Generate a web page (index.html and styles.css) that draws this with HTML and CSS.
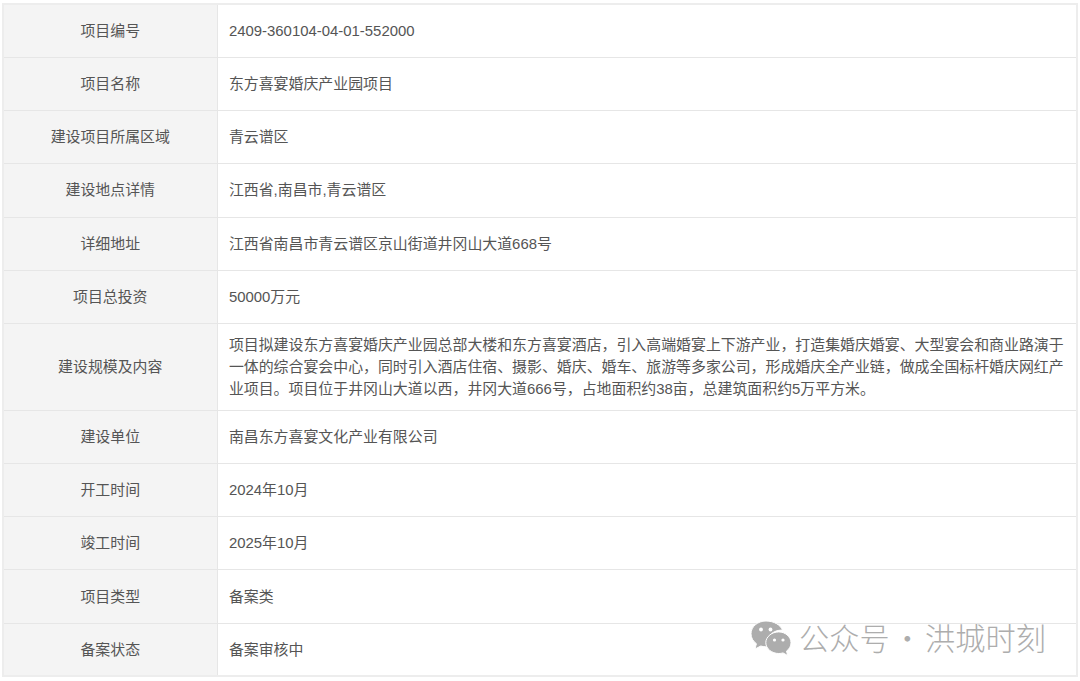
FILE: index.html
```html
<!DOCTYPE html>
<html lang="zh-CN">
<head>
<meta charset="utf-8">
<title>项目信息</title>
<link rel="stylesheet" href="styles.css">
</head>
<body>
<table class="info">
<tbody>
<tr><th>项目编号</th><td>2409-360104-04-01-552000</td></tr>
<tr><th>项目名称</th><td>东方喜宴婚庆产业园项目</td></tr>
<tr><th>建设项目所属区域</th><td>青云谱区</td></tr>
<tr><th>建设地点详情</th><td>江西省,南昌市,青云谱区</td></tr>
<tr><th>详细地址</th><td>江西省南昌市青云谱区京山街道井冈山大道668号</td></tr>
<tr><th>项目总投资</th><td>50000万元</td></tr>
<tr class="tall"><th>建设规模及内容</th><td>项目拟建设东方喜宴婚庆产业园总部大楼和东方喜宴酒店，引入高端婚宴上下游产业，打造集婚庆婚宴、大型宴会和商业路演于一体的综合宴会中心，同时引入酒店住宿、摄影、婚庆、婚车、旅游等多家公司，形成婚庆全产业链，做成全国标杆婚庆网红产业项目。项目位于井冈山大道以西，井冈大道666号，占地面积约38亩，总建筑面积约5万平方米。</td></tr>
<tr><th>建设单位</th><td>南昌东方喜宴文化产业有限公司</td></tr>
<tr><th>开工时间</th><td>2024年10月</td></tr>
<tr><th>竣工时间</th><td>2025年10月</td></tr>
<tr><th>项目类型</th><td>备案类</td></tr>
<tr><th>备案状态</th><td>备案审核中</td></tr>
</tbody>
</table>
<div class="mark">
<svg class="mark-icon" width="42" height="36" viewBox="0 0 42 36" aria-hidden="true">
<path class="bubble" d="M16 1C7.6 1 1 6.700 1 13.800c0 4 2.100 7.500 5.400 9.900L5 29l5.800-3c1.500.5 3.200.8 5 .8.700 0 1.300 0 2-.1-.5-1.300-.7-2.600-.7-4 0-7 6.500-12.600 14.600-12.600h.8C30.500 5 24 1 16 1z"/>
<path class="bubble" d="M41 22.700c0-6-5.900-10.800-12.200-10.800-6.900 0-13 4.800-13 10.800s6.100 10.800 13 10.800c1.500 0 2.900-.2 4.200-.6l4.700 2.600-1.200-4.400c3-2.200 4.500-5.100 4.500-8.400z"/>
<circle class="eye" cx="11" cy="9.500" r="1.900"/><circle class="eye" cx="20.500" cy="9.500" r="1.900"/>
<circle class="eye" cx="24.500" cy="20" r="1.600"/><circle class="eye" cx="33" cy="20" r="1.600"/>
</svg>
<span class="mark-text">公众号 · 洪城时刻</span>
</div>
</body>
</html>
```

FILE: styles.css
```css
html, body {
  margin: 0;
  padding: 0;
  background: #fff;
}
body {
  width: 1080px;
  height: 681px;
  overflow: hidden;
  position: relative;
  padding: 3px 0 0 2px;
  box-sizing: border-box;
  font-family: "Liberation Sans", "Noto Sans CJK SC", sans-serif;
  font-size: 14.92px;
  color: #555;
}
.info {
  width: 1076px;
  table-layout: fixed;
  border-collapse: collapse;
  border: 2px solid #ededed;
}
.info th, .info td {
  border: 1px solid #e6e6e6;
  height: 53.25px;
  box-sizing: border-box;
  line-height: 22px;
  padding: 0 8px;
  font-weight: normal;
}
.info th {
  width: 214px;
  background: #f4f4f4;
  text-align: center;
}
.info td {
  text-align: left;
  padding-left: 11.4px;
}
.tall th, .tall td {
  height: 86.7px;
}
.mark {
  position: absolute;
  left: 750px;
  top: 619px;
  display: flex;
  align-items: center;
  gap: 7px;
  color: #adadad;
}
.mark-icon {
  display: block;
}
.bubble {
  fill: #adadad;
  stroke: #fff;
  stroke-width: 1;
}
.eye {
  fill: #fff;
}
.mark-text {
  font-size: 30.2px;
  line-height: 36px;
  padding-bottom: 2px;
  word-spacing: -4px;
  font-family: "Noto Sans CJK SC", sans-serif;
  font-weight: 300;
  white-space: nowrap;
}
```
